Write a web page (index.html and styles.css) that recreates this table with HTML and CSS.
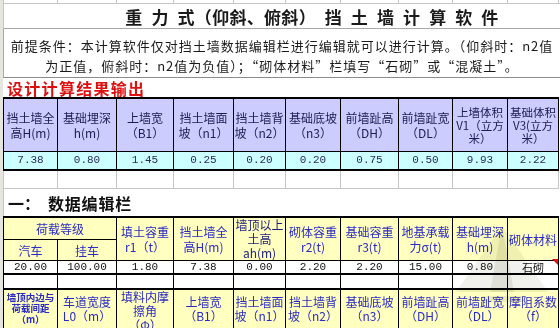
FILE: index.html
```html
<!DOCTYPE html>
<html lang="zh-CN">
<head>
<meta charset="utf-8">
<link rel="stylesheet" href="styles.css">
</head>
<body>
<div class="sheet">
  <div class="strip"></div>
  <div class="main">
    <table class="grid toprow">
      <colgroup><col class="c1"><col class="c2"><col class="c3"><col class="c4"><col class="c5"><col class="c6"><col class="c7"><col class="c8"><col class="c9"><col class="c10"></colgroup>
      <tr><td></td><td></td><td></td><td></td><td></td><td></td><td></td><td></td><td></td><td></td></tr>
    </table>
    <div class="title">重&ensp;力&ensp;式（仰斜、俯斜）&ensp;挡&ensp;土&ensp;墙&ensp;计&ensp;算&ensp;软&ensp;件</div>
    <div class="premise">前提条件：本计算软件仅对挡土墙数据编辑栏进行编辑就可以进行计算。（仰斜时：n2值<br>为正值，俯斜时：n2值为负值）；“砌体材料”栏填写“石砌”或“混凝土”。</div>
    <div class="red-head">设计计算结果输出</div>
    <table class="grid out">
      <colgroup><col class="c1"><col class="c2"><col class="c3"><col class="c4"><col class="c5"><col class="c6"><col class="c7"><col class="c8"><col class="c9"><col class="c10"></colgroup>
      <tr class="oh">
        <td>挡土墙全<br>高H(m)</td>
        <td>基础埋深<br>h(m)</td>
        <td>上墙宽<br>（B1）</td>
        <td>挡土墙面<br>坡（n1）</td>
        <td>挡土墙背<br>坡（n2）</td>
        <td>基础底坡<br>（n3）</td>
        <td>前墙趾高<br>（DH）</td>
        <td>前墙趾宽<br>（DL）</td>
        <td class="lft">上墙体积<br>V1（立方<br>米）</td>
        <td class="lft">基础体积<br>V3(立方<br>米）</td>
      </tr>
      <tr class="od">
        <td>7.38</td><td>0.80</td><td>1.45</td><td>0.25</td><td>0.20</td><td>0.20</td><td>0.75</td><td>0.50</td><td>9.93</td><td>2.22</td>
      </tr>
      <tr class="blank b18">
        <td></td><td></td><td></td><td></td><td></td><td></td><td></td><td></td><td></td><td></td>
      </tr>
    </table>
    <div class="sec-head">一：&ensp;<span class="sp">数据编辑栏</span></div>
    <table class="grid edit">
      <colgroup><col class="c1"><col class="c2"><col class="c3"><col class="c4"><col class="c5"><col class="c6"><col class="c7"><col class="c8"><col class="c9"><col class="c10"></colgroup>
      <tr class="eh1">
        <td colspan="2">荷载等级</td>
        <td rowspan="2">填土容重<br>r1（t）</td>
        <td rowspan="2">挡土墙全<br>高H(m)</td>
        <td rowspan="2" class="three">墙顶以上<br>土高<br>ah(m)</td>
        <td rowspan="2">砌体容重<br>r2(t)</td>
        <td rowspan="2">基础容重<br>r3(t)</td>
        <td rowspan="2">地基承载<br>力σ(t)</td>
        <td rowspan="2">基础埋深<br>h(m)</td>
        <td rowspan="2" class="mat">砌体材料</td>
      </tr>
      <tr class="eh2">
        <td>汽车</td><td>挂车</td>
      </tr>
      <tr class="ed">
        <td>20.00</td><td>100.00</td><td>1.80</td><td>7.38</td><td>0.00</td><td>2.20</td><td>2.20</td><td>15.00</td><td>0.80</td><td class="cn">石砌</td>
      </tr>
      <tr class="blank b15">
        <td></td><td></td><td></td><td></td><td></td><td></td><td></td><td></td><td></td><td></td>
      </tr>
      <tr class="eh3">
        <td class="small">墙顶内边与<br>荷载间距<br>（m）</td>
        <td>车道宽度<br>L0（m）</td>
        <td class="tall">填料内摩<br>擦角<br>（Φ）</td>
        <td>上墙宽<br>（B1）</td>
        <td>挡土墙面<br>坡（n1）</td>
        <td>挡土墙背<br>坡（n2）</td>
        <td>基础底坡<br>（n3）</td>
        <td>前墙趾高<br>（DH）</td>
        <td>前墙趾宽<br>（DL）</td>
        <td>摩阻系数<br>（f）</td>
      </tr>
    </table>
  </div>
</div>
<div class="comment-mark"></div>
<svg class="watermark" width="100" height="90" viewBox="0 0 100 90">
  <polygon points="50,4 96,70 4,70" fill="#e2e2da" opacity="0.5"/>
  <polygon points="50,4 62,70 38,70" fill="#cfcfc6" opacity="0.5"/>
  <rect x="30" y="74" width="40" height="6" fill="#dadad2" opacity="0.5"/>
</svg>
</body>
</html>
```

FILE: styles.css
```css
html, body {
  margin: 0;
  padding: 0;
}
body {
  width: 560px;
  height: 328px;
  overflow: hidden;
  background: #ffffff;
  font-family: "Noto Sans CJK SC", "Noto Sans", sans-serif;
  color: #111;
  position: relative;
}
.sheet {
  display: flex;
}
.strip {
  width: 3px;
  flex: none;
  background: #e6e6de;
}
.main {
  width: 557px;
  flex: none;
  display: flex;
  flex-direction: column;
}
.grid {
  border-collapse: collapse;
  table-layout: fixed;
  width: 555px;
}
.grid td {
  padding: 0;
  text-align: center;
  vertical-align: middle;
  overflow: hidden;
  white-space: nowrap;
}
.c1 { width: 54px; }
.c2 { width: 59px; }
.c3 { width: 57px; }
.c4 { width: 60px; }
.c5 { width: 52px; }
.c6 { width: 55px; }
.c7 { width: 58px; }
.c8 { width: 54px; }
.c9 { width: 55px; }
.c10 { width: 51px; }

.toprow td {
  height: 3px;
  border-left: 1px solid #c6c6c6;
  border-right: 1px solid #c6c6c6;
}

.title {
  height: 26px;
  box-sizing: border-box;
  border-top: 1px solid #c6c6c6;
  border-left: 1px solid #c6c6c6;
  border-bottom: 1px solid #a8a8a8;
  text-align: center;
  font-size: 17px;
  font-weight: 700;
  line-height: 26px;
  color: #1a1a1a;
  padding-left: 60px;
  letter-spacing: 0.3px;
}
.premise {
  height: 49px;
  box-sizing: border-box;
  border-left: 1px solid #a8a8a8;
  border-bottom: 1px solid #8c8c8c;
  padding-top: 7px;
  text-align: center;
  font-size: 13px;
  line-height: 20px;
  letter-spacing: 1px;
  color: #1a1a1a;
  white-space: nowrap;
}
.red-head {
  height: 19px;
  box-sizing: border-box;
  padding-left: 4px;
  font-size: 16px;
  line-height: 20px;
  font-weight: 700;
  letter-spacing: 1.3px;
  color: #dd1010;
}

.out .oh td {
  height: 52px;
  background: #ccccff;
  border: 1px solid #000;
  border-top: 2px solid #000;
  font-size: 12px;
  line-height: 15px;
  color: #1c1c50;
}
.out .oh td.lft {
  font-size: 11.5px;
  line-height: 13px;
}
.out .od td {
  height: 17px;
  background: #ccffff;
  border: 1px solid #000;
  border-bottom: 2px solid #000;
  font-family: "Liberation Mono", "DejaVu Sans Mono", monospace;
  font-size: 11px;
  line-height: 15px;
  color: #2a2a5a;
}
.blank td {
  border-left: 1px solid #c6c6c6;
  border-right: 1px solid #c6c6c6;
  border-bottom: 1px solid #c6c6c6;
}
.b18 td { height: 17px; }
.b15 td { height: 13px; }

.sec-head {
  height: 27px;
  box-sizing: border-box;
  padding-left: 4px;
  font-size: 16px;
  line-height: 29px;
  font-weight: 700;
  color: #111;
  border-left: 1px solid #c6c6c6;
}
.sec-head .sp {
  letter-spacing: 0.8px;
}

.edit td {
  background: #ffffc0;
  border: 1px solid #000;
  color: #2a2ac4;
  font-size: 12px;
  line-height: 15px;
}
.edit .eh1 td {
  border-top: 2px solid #000;
  height: 21px;
}
.edit .eh1 td.three {
  line-height: 14px;
  color: #22227a;
}
.edit .eh2 td {
  height: 20px;
}
.edit .ed td {
  background: #ffffff;
  height: 12px;
  line-height: 12px;
  border-bottom: 2px solid #000;
  font-family: "Liberation Mono", "DejaVu Sans Mono", monospace;
  font-size: 11px;
  color: #111;
}
.edit .ed td.cn {
  font-family: "Noto Sans CJK SC", sans-serif;
  font-size: 11px;
  line-height: 12px;
}
.edit .blank td {
  background: #ffffff;
  border-bottom: 2px solid #000;
}
.edit .eh3 td {
  height: 44px;
  vertical-align: top;
  padding-top: 5px;
  line-height: 14px;
}
.edit .eh3 td.tall {
  padding-top: 0;
}
.edit .eh3 td.small {
  font-size: 9.5px;
  line-height: 11px;
  font-weight: 700;
  padding-top: 2px;
}

.comment-mark {
  position: absolute;
  left: 552px;
  top: 259px;
  width: 0;
  height: 0;
  border-left: 6px solid transparent;
  border-top: 6px solid #e01010;
}
.watermark {
  position: absolute;
  left: 452px;
  top: 222px;
  pointer-events: none;
  mix-blend-mode: multiply;
}
```
